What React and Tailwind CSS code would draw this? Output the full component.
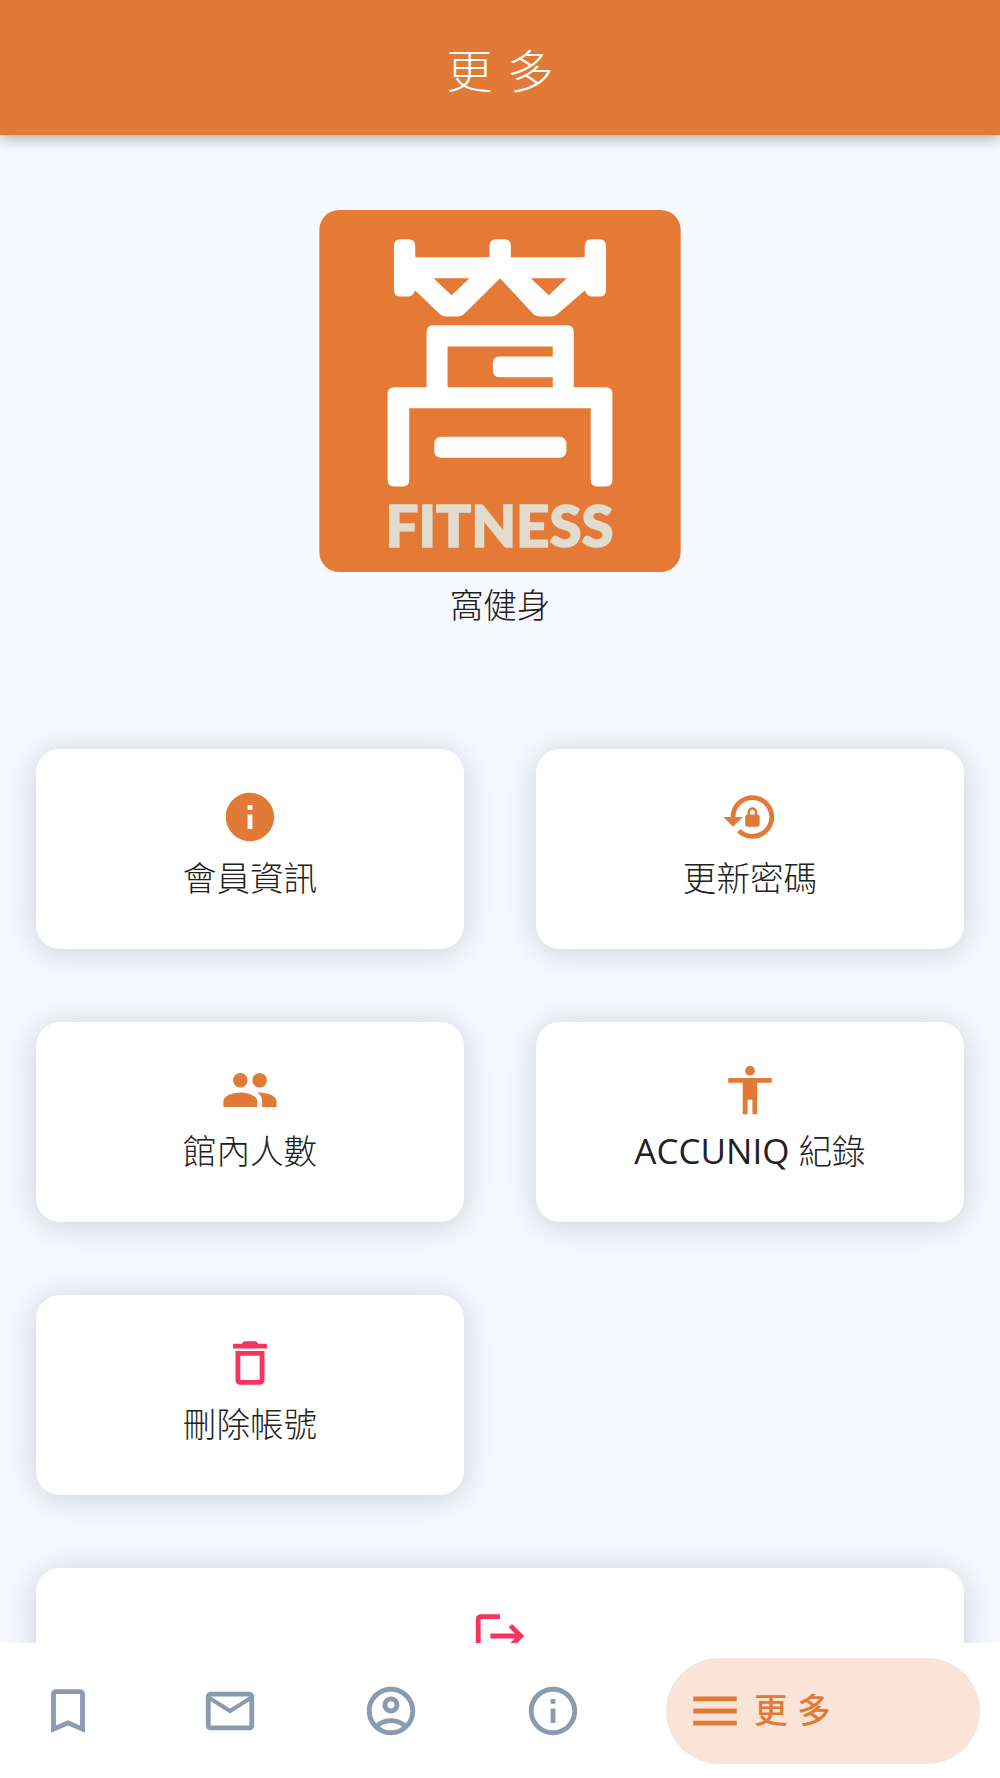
const ORANGE = "text-[#e27a37]";
const ICONS = {
  info: "M12 2C6.48 2 2 6.48 2 12s4.48 10 10 10 10-4.48 10-10S17.52 2 12 2zm1 15h-2v-6h2v6zm0-8h-2V7h2v2z",
  lockReset: "M13 3c-4.97 0-9 4.03-9 9H1l4 3.99L9 12H6c0-3.87 3.13-7 7-7s7 3.13 7 7-3.13 7-7 7c-1.93 0-3.68-.79-4.94-2.06l-1.42 1.42C8.27 19.99 10.51 21 13 21c4.97 0 9-4.03 9-9s-4.03-9-9-9zm2 8v-1c0-1.1-.9-2-2-2s-2 .9-2 2v1c-.55 0-1 .45-1 1v3c0 .55.45 1 1 1h4c.55 0 1-.45 1-1v-3c0-.55-.45-1-1-1zm-1 0h-2v-1c0-.55.45-1 1-1s1 .45 1 1v1z",
  people: "M16 11c1.66 0 2.99-1.34 2.99-3S17.66 5 16 5c-1.66 0-3 1.34-3 3s1.34 3 3 3zm-8 0c1.66 0 2.99-1.34 2.99-3S9.66 5 8 5C6.34 5 5 6.34 5 8s1.34 3 3 3zm0 2c-2.33 0-7 1.17-7 3.5V19h14v-2.5c0-2.33-4.67-3.5-7-3.5zm8 0c-.29 0-.62.02-.97.05 1.16.84 1.97 1.97 1.97 3.45V19h6v-2.5c0-2.33-4.67-3.5-7-3.5z",
  accessibility: "M12 2c1.1 0 2 .9 2 2s-.9 2-2 2-2-.9-2-2 .9-2 2-2zm9 7h-6v13h-2v-6h-2v6H9V9H3V7h18v2z",
  trash: "M6 19c0 1.1.9 2 2 2h8c1.1 0 2-.9 2-2V7H6v12zM8 9h8v10H8V9zm7.5-5l-1-1h-5l-1 1H5v2h14V4h-3.5z",
  logout: "m17 7-1.41 1.41L18.17 11H8v2h10.17l-2.58 2.58L17 17l5-5zM4 5h8V3H4c-1.1 0-2 .9-2 2v14c0 1.1.9 2 2 2h8v-2H4V5z",
  bookmark: "M17 3H7c-1.1 0-1.99.9-1.99 2L5 21l7-3 7 3V5c0-1.1-.9-2-2-2zm0 15l-5-2.18L7 18V5h10v13z",
  mail: "M22 6c0-1.1-.9-2-2-2H4c-1.1 0-2 .9-2 2v12c0 1.1.9 2 2 2h16c1.1 0 2-.9 2-2V6zm-2 0-8 5-8-5h16zm0 12H4V8l8 5 8-5v10z",
  account: "M12 2C6.48 2 2 6.48 2 12s4.48 10 10 10 10-4.48 10-10S17.52 2 12 2zM7.35 18.5C8.66 17.56 10.26 17 12 17s3.34.56 4.65 1.5C15.34 19.44 13.74 20 12 20s-3.34-.56-4.65-1.5zm10.79-1.38C16.45 15.8 14.32 15 12 15s-4.45.8-6.14 2.12C4.7 15.73 4 13.95 4 12c0-4.42 3.58-8 8-8s8 3.58 8 8c0 1.95-.7 3.73-1.86 5.12zM12 6c-1.93 0-3.5 1.57-3.5 3.5S10.07 13 12 13s3.5-1.57 3.5-3.5S13.93 6 12 6zm0 5c-.83 0-1.5-.67-1.5-1.5S11.17 8 12 8s1.5.67 1.5 1.5S12.83 11 12 11z",
  infoOutline: "M11 7h2v2h-2zm0 4h2v6h-2zm1-9C6.48 2 2 6.48 2 12s4.48 10 10 10 10-4.48 10-10S17.52 2 12 2zm0 18c-4.41 0-8-3.59-8-8s3.59-8 8-8 8 3.59 8 8-3.59 8-8 8z",
  menu: "M3 18h18v-2H3v2zm0-5h18v-2H3v2zm0-7v2h18V6H3z",
};

function Icon({ name, className }) {
  return (
    <svg viewBox="0 0 24 24" fill="currentColor" className={`h-[58px] w-[58px] shrink-0 ${className}`}>
      <path d={ICONS[name]} />
    </svg>
  );
}

function Logo() {
  return (
    <svg viewBox="57 60 1085 1087" className="h-[362px] w-[362px]">
      <rect x="57" y="60" width="1085" height="1087" rx="60" fill="#e47a36" />
      <path
        fillRule="evenodd"
        fill="#fff"
        d="M281 168q0-20 20-20h24q20 0 20 20V202H568V168q0-20 20-20h24q20 0 20 20V202H854V168q0-20 20-20h24q20 0 20 20V300q0 20-20 20h-24q-12 0-20-18L775 370q-10 10-24 10h-30q-14 0-24-10L600 265 494 370q-10 10-24 10h-30q-14 0-24-10L345 302q-8 18-20 18h-24q-20 0-20-20ZM400 265H508L454 316ZM692 265H800L746 316Z"
      />
      <path
        fillRule="evenodd"
        fill="#fff"
        d="M379 426q0-20 20-20H801q20 0 20 20V592H917q20 0 20 20V870q0 20-20 20H892q-20 0-20-20V655H327V870q0 20-20 20H282q-20 0-20-20V612q0-20 20-20H379ZM442 470V592H758V562H598q-20 0-20-20V520q0-20 20-20H758V470Z"
      />
      <rect x="402" y="741" width="397" height="63" rx="20" fill="#fff" />
      <text
        x="256"
        y="1073"
        textLength="684"
        lengthAdjust="spacingAndGlyphs"
        fill="#e2dcd0"
        stroke="#e2dcd0"
        strokeWidth="5"
        fontSize="172"
        fontWeight="900"
        fontFamily="Lato, sans-serif"
      >
        FITNESS
      </text>
    </svg>
  );
}

function Card({ icon, label, latin, danger, className = "" }) {
  return (
    <div className={`flex h-[200px] flex-col items-center rounded-3xl bg-white pt-[39px] shadow-[0_3px_32px_rgba(80,95,125,0.28)] ${className}`}>
      <Icon name={icon} className={danger ? "text-[#f7345e]" : ORANGE} />
      <div className="mt-[8px] text-[33.6px] leading-[48px] font-light text-[#212121]">
        {latin && <span className="text-[35px] font-normal">{latin} </span>}
        {label}
      </div>
    </div>
  );
}

const NAV = ["bookmark", "mail", "account", "infoOutline"];

export default function App() {
  return (
    <div
      className="flex h-[1778px] w-[1000px] flex-col overflow-hidden bg-[#f8f9ff]"
      style={{ fontFamily: '"Open Sans", "Noto Sans CJK TC", sans-serif' }}
    >
      <header className="relative z-10 flex h-[135px] shrink-0 items-center justify-center bg-[#e27a37] pt-[5px] shadow-[0_4px_14px_rgba(0,0,0,0.3)]">
        <h1 className="pl-[15px] text-[46px] font-light tracking-[15px] text-white">更多</h1>
      </header>

      <main className="min-h-0 flex-1 overflow-hidden">
        <div className="flex flex-col items-center pt-[75px]">
          <Logo />
          <div className="mt-[9px] text-[33.6px] leading-[48px] font-light text-[#212121]">窩健身</div>
        </div>
        <div className="mt-[120px] grid grid-cols-2 gap-x-[72px] gap-y-[73px] px-9">
          <Card icon="info" label="會員資訊" />
          <Card icon="lockReset" label="更新密碼" />
          <Card icon="people" label="館內人數" />
          <Card icon="accessibility" latin="ACCUNIQ" label="紀錄" />
          <Card icon="trash" label="刪除帳號" danger />
          <div />
          <Card icon="logout" label="登出" danger className="col-span-2" />
        </div>
      </main>

      <nav className="relative z-10 flex h-[135px] shrink-0 items-center bg-white pr-5 pl-[39px]">
        <div className="flex w-[543px] justify-between text-[#8a9bb0]">
          {NAV.map((n) => (
            <Icon key={n} name={n} />
          ))}
        </div>
        <div className={`ml-auto flex h-[106px] w-[314px] items-center gap-[10px] rounded-[53px] bg-[#fae4d8] pl-[20px] ${ORANGE}`}>
          <Icon name="menu" />
          <span className="text-[33.6px] font-medium tracking-[9.6px]">更多</span>
        </div>
      </nav>
    </div>
  );
}
